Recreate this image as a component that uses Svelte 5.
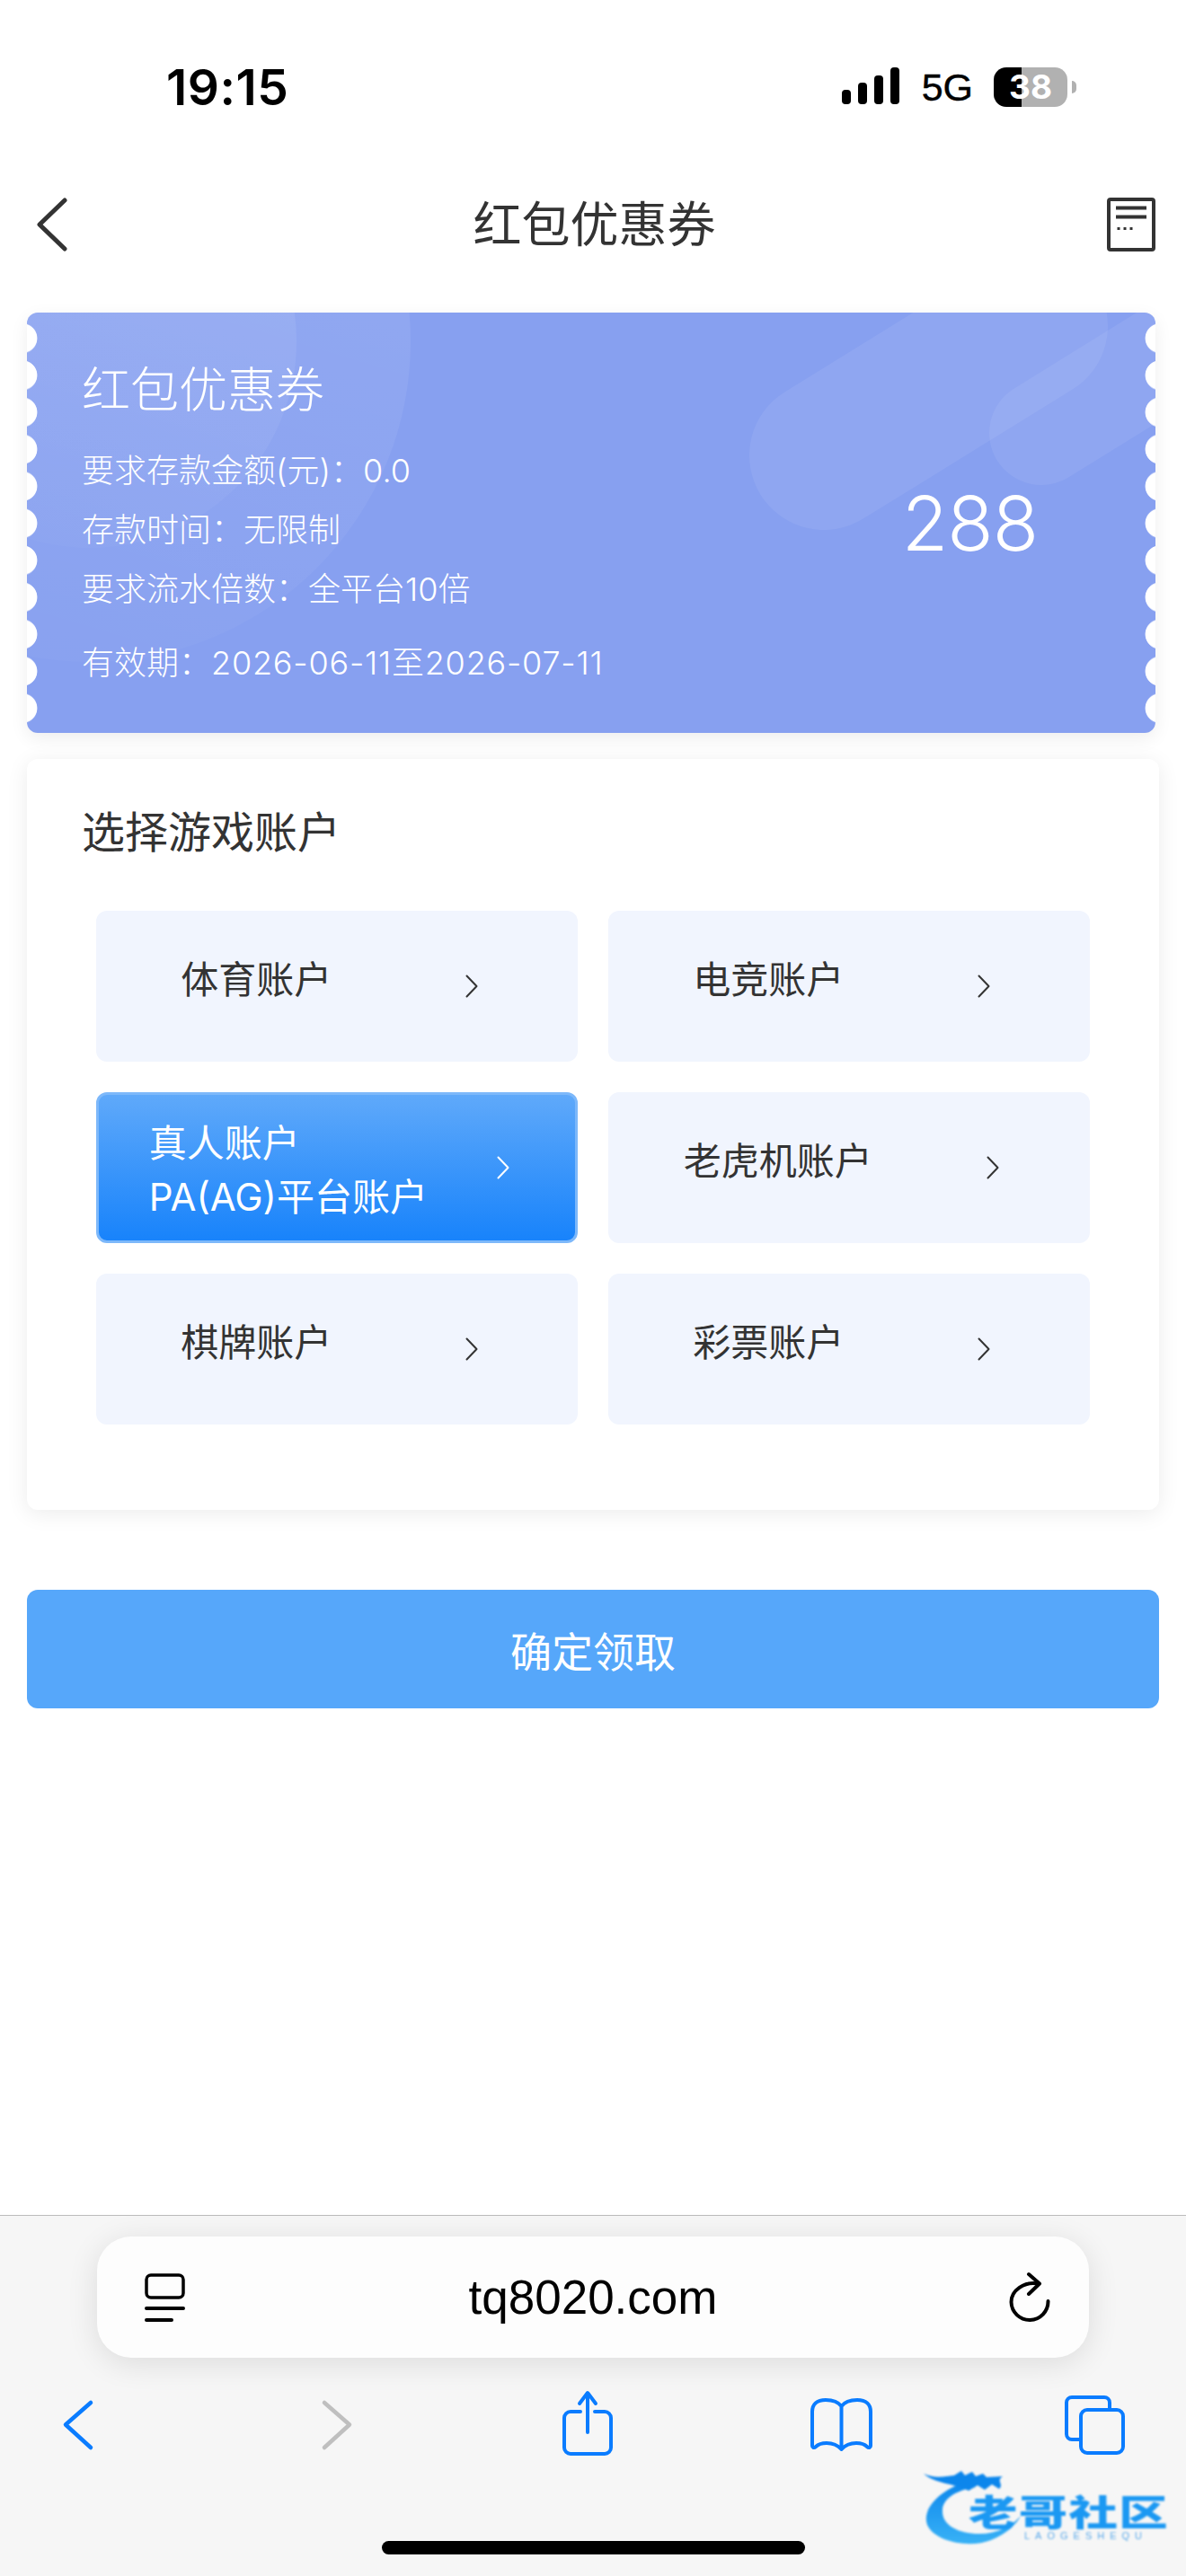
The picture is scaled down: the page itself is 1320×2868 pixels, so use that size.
<script>
  const battery = 38;

  const rows = ["要求存款金额(元)：0.0", "存款时间：无限制", "要求流水倍数：全平台10倍"];

  const accounts = [
    { lines: ["体育账户"] },
    { lines: ["电竞账户"] },
    { lines: ["真人账户", "PA(AG)平台账户"], active: true },
    { lines: ["老虎机账户"] },
    { lines: ["棋牌账户"] },
    { lines: ["彩票账户"] }
  ];
</script>

<div class="page">
  <header class="status">
    <span class="time">19:15</span>
    <div class="status-right">
      <svg class="signal" width="64" height="42" viewBox="0 0 64 42">
        <rect x="0" y="25" width="10" height="16" rx="4" />
        <rect x="18" y="17" width="10" height="24" rx="4" />
        <rect x="36" y="9" width="10" height="32" rx="4" />
        <rect x="54" y="0" width="10" height="41" rx="4" />
      </svg>
      <span class="net">5G</span>
      <div class="battery" style="background: linear-gradient(90deg, #000 {battery}%, #b1b1b1 {battery}%)">{battery}</div>
      <span class="nub"></span>
    </div>
  </header>

  <nav class="topnav">
    <svg class="nav-back" width="36" height="60" viewBox="0 0 36 60" fill="none" stroke="#333" stroke-width="5" stroke-linecap="round" stroke-linejoin="round">
      <path d="M32 3 L4 30 L32 57" />
    </svg>
    <h1>红包优惠券</h1>
    <svg class="nav-note" width="54" height="60" viewBox="0 0 54 60" fill="none">
      <rect x="2" y="2" width="50" height="56" rx="2" stroke="#333" stroke-width="4" />
      <path d="M10 11.5 H44 M10 21.5 H44" stroke="#333" stroke-width="4" />
      <path d="M13 33 V36 M20 33 V36 M27 33 V36" stroke="#333" stroke-width="3" />
    </svg>
  </nav>

  <main class="content">
    <section class="coupon">
      <svg class="coupon-bg" width="1256" height="468" viewBox="0 0 1256 468">
        <defs>
          <linearGradient id="fade" x1="0.5" y1="0" x2="0.2" y2="1">
            <stop offset="0" stop-color="#fff" stop-opacity="0.1" />
            <stop offset="1" stop-color="#fff" stop-opacity="0.015" />
          </linearGradient>
        </defs>
        <circle cx="70" cy="32" r="357" fill="url(#fade)" />
        <circle cx="70" cy="32" r="230" fill="url(#fade)" />
        <path d="M887 159 L1120 15" stroke="#fff" stroke-opacity="0.07" stroke-width="166" stroke-linecap="round" />
        <path d="M1129 134 L1300 28" stroke="#fff" stroke-opacity="0.07" stroke-width="116" stroke-linecap="round" />
      </svg>
      <div class="coupon-text">
        <h2>红包优惠券</h2>
        {#each rows as row}
          <p>{row}</p>
        {/each}
        <p class="expiry">有效期：<span>2026-06-11至2026-07-11</span></p>
      </div>
      <div class="amount">288</div>
      <span class="scallop left"></span>
      <span class="scallop right"></span>
    </section>

    <section class="panel">
      <h3>选择游戏账户</h3>
      <div class="grid">
        {#each accounts as item}
          <div class="tile" class:active={item.active}>
            <div class="label" class:single={item.lines.length === 1}>
              {#each item.lines as line}
                <div>{line}</div>
              {/each}
            </div>
            <svg width="14" height="26" viewBox="0 0 14 26" fill="none" stroke={item.active ? "#fff" : "#333"} stroke-width="2" stroke-linecap="round" stroke-linejoin="round">
              <path d="M1.5 1.5 L12.5 13 L1.5 24.5" />
            </svg>
          </div>
        {/each}
      </div>
    </section>

    <button class="confirm">确定领取</button>
  </main>

  <footer class="toolbar">
    <div class="address">
      <svg class="tabs-icon" width="45" height="54" viewBox="0 0 45 54" fill="none" stroke="#000">
        <rect x="2" y="2" width="41" height="25" rx="5" stroke-width="3.5" />
        <path d="M2 39 H43 M2 52 H30" stroke-width="4" stroke-linecap="round" />
      </svg>
      <span class="url">tq8020.com</span>
      <svg class="reload" width="50" height="60" viewBox="0 0 50 60" fill="none" stroke="#000" stroke-width="4" stroke-linecap="round" stroke-linejoin="round">
        <path d="M33 14.5 C18 12 3.5 22 3.5 35 A20.5 20.5 0 0 0 44.5 34" />
        <path d="M23 4 L35 14.5 L23 26" />
      </svg>
    </div>

    <div class="actions">
      <svg width="70" height="76" viewBox="0 0 70 76" fill="none" stroke="#0a7cff" stroke-width="4.5" stroke-linecap="round" stroke-linejoin="round">
        <path d="M50 15 L22 39.5 L50 65" />
      </svg>
      <svg width="70" height="76" viewBox="0 0 70 76" fill="none" stroke="#bfbfbf" stroke-width="4.5" stroke-linecap="round" stroke-linejoin="round">
        <path d="M20 15 L48 39.5 L20 65" />
      </svg>
      <svg width="70" height="76" viewBox="0 0 70 76" fill="none" stroke="#0a7cff" stroke-width="4" stroke-linecap="round" stroke-linejoin="round">
        <path d="M27 25 H16 A7 7 0 0 0 9 32 V65 A7 7 0 0 0 16 72 H54 A7 7 0 0 0 61 65 V32 A7 7 0 0 0 54 25 H43" />
        <path d="M35 48 V5 M26 16 L35 4 L44 16" />
      </svg>
      <svg width="70" height="76" viewBox="0 0 70 76" fill="none" stroke="#0a7cff" stroke-width="4" stroke-linecap="round" stroke-linejoin="round">
        <path d="M35.5 19 C31 13 24 12 18 12 C8 12 3 17 3 25 V63 C3 65 5 66 7 64 C11 60 15 60 19 60 C26 60 31 62 35.5 67 C40 62 45 60 52 60 C56 60 60 60 64 64 C66 66 68 65 68 63 V25 C68 17 63 12 53 12 C47 12 40 13 35.5 19 V67" />
      </svg>
      <svg width="70" height="76" viewBox="0 0 70 76" fill="none" stroke="#0a7cff" stroke-width="4">
        <path d="M52 21 V15 A6 6 0 0 0 46 9 H10 A6 6 0 0 0 4 15 V50 A6 6 0 0 0 10 56 H18" />
        <rect x="20" y="23" width="47" height="48" rx="7" />
      </svg>
    </div>

    <div class="home-bar"></div>

    <div class="watermark">
      <svg width="140" height="90" viewBox="0 0 140 90">
        <defs>
          <linearGradient id="swirl" x1="0" y1="0" x2="0" y2="1">
            <stop offset="0" stop-color="#0c86ec" />
            <stop offset="1" stop-color="#39b2f6" />
          </linearGradient>
        </defs>
        <path d="M48 18 C15 28 -2 50 4 66 C11 84 50 93 75 83 C92 76 103 66 108 56 C98 68 82 76 62 76 C38 76 20 66 21 50 C21 38 34 28 58 24 Z" fill="url(#swirl)" />
        <path d="M0 9 C12 15 24 12 34 11 L42 6 L46 11 L54 7 L58 12 L66 9 L70 13 L88 12 C80 17 90 21 84 26 L76 21 L68 27 L60 22 L50 28 C34 20 12 20 0 9 Z" fill="#0c86ec" />
      </svg>
      <div class="wm-name">老哥社区</div>
      <div class="wm-sub">LAOGESHEQU</div>
    </div>
  </footer>
</div>

<style>
  :global(body) {
    margin: 0;
    background: #fff;
  }

  .page {
    width: 1320px;
    height: 2868px;
    display: flex;
    flex-direction: column;
    overflow: hidden;
    font-family: Inter, "Noto Sans CJK SC", sans-serif;
    color: #333;
  }

  .status {
    height: 194px;
    box-sizing: border-box;
    padding: 0 122px 0 185px;
    display: flex;
    align-items: center;
    justify-content: space-between;
    color: #000;
  }

  .time {
    font-size: 55px;
    font-weight: 600;
    letter-spacing: 0.5px;
  }

  .status-right {
    display: flex;
    align-items: center;
  }

  .signal {
    fill: #000;
    margin-top: -2px;
  }

  .net {
    font-family: "Liberation Sans", sans-serif;
    font-size: 43px;
    margin-left: 25px;
    -webkit-text-stroke: 0.4px #000;
  }

  .battery {
    width: 82px;
    height: 44px;
    margin-left: 23px;
    border-radius: 14px;
    color: #fff;
    font-size: 37px;
    font-weight: 700;
    line-height: 44px;
    text-align: center;
  }

  .nub {
    width: 5px;
    height: 14px;
    margin-left: 5px;
    border-radius: 0 6px 6px 0;
    background: #b1b1b1;
  }

  .topnav {
    height: 112px;
    box-sizing: border-box;
    padding: 0 34px 0 37px;
    display: grid;
    grid-template-columns: 1fr auto 1fr;
    align-items: center;
  }

  .nav-back {
    margin-left: 3px;
  }

  .nav-note {
    justify-self: end;
  }

  h1 {
    margin: 2px 0 0;
    font-size: 54px;
    font-weight: 400;
    line-height: 60px;
  }

  .content {
    padding: 42px 30px 0;
  }

  .coupon {
    position: relative;
    width: 1256px;
    height: 468px;
    display: flex;
    justify-content: space-between;
    align-items: center;
    background: #87a0f0;
    border-radius: 12px;
    box-shadow: 0 6px 20px rgba(0, 0, 0, 0.07);
    color: #fff;
    overflow: hidden;
  }

  .coupon-bg {
    position: absolute;
    left: 0;
    top: 0;
  }

  .coupon-text {
    position: relative;
    align-self: flex-start;
    padding: 57px 0 0 61px;
  }

  h2 {
    margin: 0 0 26px;
    font-size: 54px;
    font-weight: 300;
    line-height: 60px;
  }

  .coupon-text p {
    margin: 0;
    font-size: 36px;
    font-weight: 300;
    line-height: 66px;
  }

  .coupon-text p.expiry {
    margin-top: 16px;
  }

  .expiry span {
    letter-spacing: 0.8px;
  }

  .amount {
    position: relative;
    margin-right: 131px;
    font-size: 84px;
    font-weight: 300;
    letter-spacing: -1px;
  }

  .scallop {
    position: absolute;
    top: 8px;
    width: 12px;
    height: 451px;
    background-size: 12px 41.2px;
    background-repeat: repeat-y;
  }

  .scallop.left {
    left: 0;
    background-image: radial-gradient(circle at -5px 50%, #fff 16px, transparent 16.8px);
  }

  .scallop.right {
    right: 0;
    background-image: radial-gradient(circle at 17px 50%, #fff 16px, transparent 16.8px);
  }

  .panel {
    width: 1260px;
    height: 836px;
    box-sizing: border-box;
    margin-top: 29px;
    padding: 52px 0 0 61px;
    border-radius: 12px;
    background: #fff;
    box-shadow: 0 4px 24px rgba(0, 0, 0, 0.08);
  }

  h3 {
    margin: 0 0 57px;
    font-size: 48px;
    font-weight: 400;
    line-height: 60px;
  }

  .grid {
    display: grid;
    grid-template-columns: repeat(2, 536px);
    grid-auto-rows: 168px;
    gap: 34px;
    margin-left: 16px;
  }

  .tile {
    box-sizing: border-box;
    padding: 0 37px 0 20px;
    display: flex;
    align-items: center;
    justify-content: space-around;
    border-radius: 12px;
    background: #f1f5fe;
    font-size: 42px;
    line-height: 60px;
  }

  .tile.active {
    border: 3px solid #7db8fa;
    padding: 0 34px 0 17px;
    background: linear-gradient(180deg, #5fa9fa, #1883fb);
    color: #fff;
  }

  .label {
    margin-top: 6px;
  }

  .label.single {
    margin: 0 0 14px;
  }

  .confirm {
    display: block;
    width: 1260px;
    height: 132px;
    margin-top: 89px;
    padding: 0;
    border: 0;
    border-radius: 12px;
    background: #56a7fa;
    color: #fff;
    font-family: inherit;
    font-size: 46px;
  }

  .toolbar {
    position: relative;
    margin-top: auto;
    height: 402px;
    box-sizing: border-box;
    padding-top: 23px;
    border-top: 1px solid #bbb;
    background: #f6f6f6;
  }

  .address {
    width: 1104px;
    height: 135px;
    box-sizing: border-box;
    margin-left: 108px;
    padding: 0 47px;
    display: grid;
    grid-template-columns: 1fr auto 1fr;
    align-items: center;
    border-radius: 38px;
    background: #fdfdfd;
    box-shadow: 0 6px 34px rgba(0, 0, 0, 0.11);
  }

  .tabs-icon {
    margin-left: 6px;
  }

  .url {
    font-family: "Liberation Sans", sans-serif;
    font-size: 53px;
    color: #000;
  }

  .reload {
    justify-self: end;
    margin-right: -7px;
  }

  .actions {
    display: flex;
    margin-top: 35px;
    padding-left: 51px;
  }

  .actions svg {
    overflow: visible;
    margin-left: 212px;
  }

  .actions svg:nth-child(1) {
    margin-left: 0;
  }

  .actions svg:nth-child(2) {
    margin-left: 220px;
  }

  .actions svg:nth-child(3) {
    margin-left: 208px;
  }

  .home-bar {
    width: 471px;
    height: 15px;
    margin: 93px 0 0 425px;
    border-radius: 8px;
    background: #000;
  }

  .watermark {
    position: absolute;
    left: 1028px;
    top: 278px;
    width: 275px;
    height: 92px;
    filter: blur(0.8px);
  }

  .wm-name {
    position: absolute;
    left: 50px;
    top: 31px;
    font-size: 40px;
    font-weight: 900;
    line-height: 44px;
    letter-spacing: 1px;
    white-space: nowrap;
    color: #1b98f2;
    transform: scaleX(1.36);
    transform-origin: left center;
  }

  .wm-sub {
    position: absolute;
    left: 112px;
    top: 72px;
    font-family: "Liberation Sans", sans-serif;
    font-size: 11px;
    line-height: 12px;
    letter-spacing: 6px;
    color: #5aa9ea;
  }
</style>
